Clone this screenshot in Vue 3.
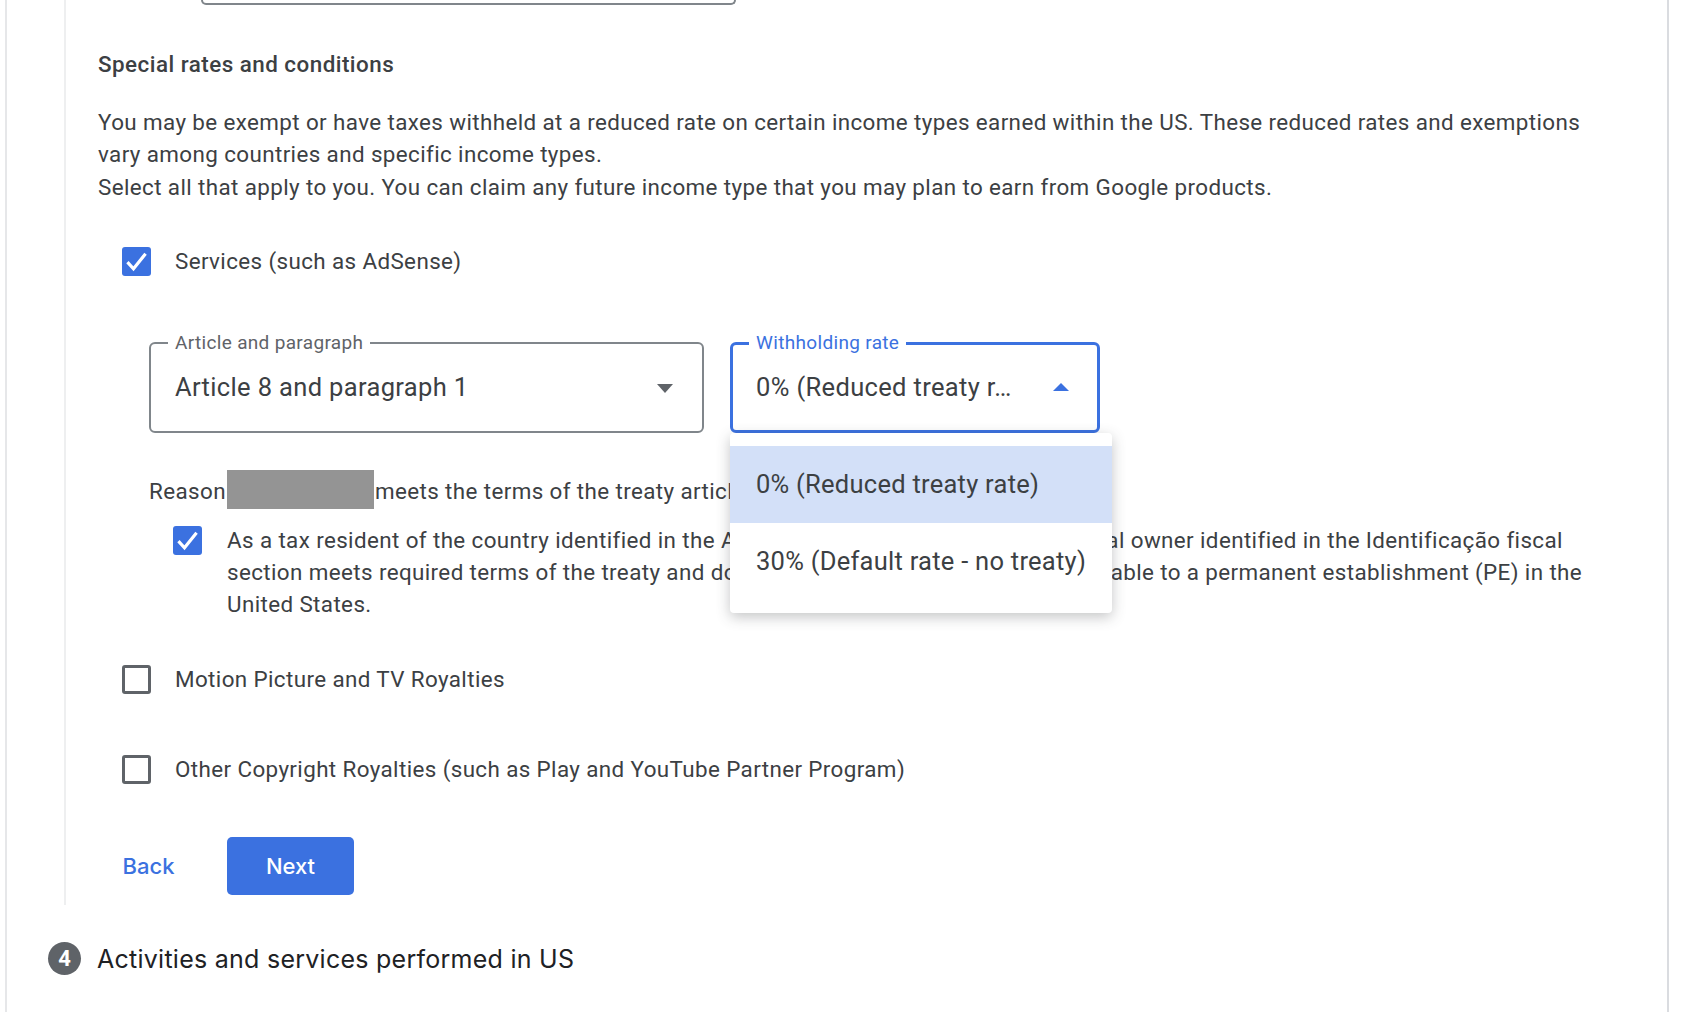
<script setup>
const options = ['0% (Reduced treaty rate)', '30% (Default rate - no treaty)']
</script>

<template>
  <div class="card">
    <div class="step">
      <div class="stub"></div>
      <h3 class="title">Special rates and conditions</h3>
      <p class="intro">
        You may be exempt or have taxes withheld at a reduced rate on certain income types earned within the US. These reduced rates and exemptions<br />
        vary among countries and specific income types.<br />
        Select all that apply to you. You can claim any future income type that you may plan to earn from Google products.
      </p>

      <label class="check-row first">
        <span class="box on">
          <svg viewBox="0 0 24 24"><path d="M4.5 12.5l5 5.5L19.5 5.5" /></svg>
        </span>
        <span>Services (such as AdSense)</span>
      </label>

      <div class="selects">
        <div class="select neutral">
          <span class="legend">Article and paragraph</span>
          <span class="value">Article 8 and paragraph 1</span>
          <span class="caret down"></span>
        </div>
        <div class="select active">
          <span class="legend">Withholding rate</span>
          <span class="value">0% (Reduced treaty r…</span>
          <span class="caret up"></span>
          <ul class="menu">
            <li v-for="(o, i) in options" :key="o" :class="{ sel: i === 0 }">{{ o }}</li>
          </ul>
        </div>
      </div>

      <div class="reason">
        <span class="reason-text">Reason</span><span class="redact"></span><span class="reason-text">meets the terms of the treaty article</span>
      </div>

      <div class="attest">
        <span class="box on">
          <svg viewBox="0 0 24 24"><path d="M4.5 12.5l5 5.5L19.5 5.5" /></svg>
        </span>
        <p>
          As a tax resident of the country identified in the Address on form section, the beneficial owner identified in the Identificação fiscal<br />
          section meets required terms of the treaty and does not own any such income attributable to a permanent establishment (PE) in the<br />
          United States.
        </p>
      </div>

      <label class="check-row motion">
        <span class="box"></span>
        <span>Motion Picture and TV Royalties</span>
      </label>
      <label class="check-row other">
        <span class="box"></span>
        <span>Other Copyright Royalties (such as Play and YouTube Partner Program)</span>
      </label>

      <div class="actions">
        <button class="back">Back</button>
        <button class="next">Next</button>
      </div>
    </div>

    <div class="next-step">
      <span class="num">4</span>
      <span class="next-title">Activities and services performed in US</span>
    </div>
  </div>
</template>

<style>
html, body { margin: 0; background: #fff; overflow: hidden; }
</style>

<style scoped>
.card {
  box-sizing: border-box;
  width: 1664px;
  height: 1012px;
  margin-left: 5px;
  border-left: 2px solid #e6e7e9;
  border-right: 2px solid #dadce0;
  overflow: hidden;
  font-family: Roboto, "Liberation Sans", sans-serif;
  color: #3c4043;
  font-size: 22.4px;
  letter-spacing: 0.39px;
}
.step {
  margin-left: 57px;
  border-left: 2px solid #eeeff0;
  padding-left: 32px;
  height: 905px;
  box-sizing: border-box;
}
.stub {
  width: 535px;
  height: 5px;
  margin-left: 103px;
  box-sizing: border-box;
  border: 2px solid #80868b;
  border-top: 0;
  border-radius: 0 0 6px 6px;
}
.title {
  margin: 45px 0 0;
  font-size: 22.4px;
  line-height: 28px;
  font-weight: 500;
  letter-spacing: 0.48px;
}
.intro {
  margin: 28px 0 0;
  line-height: 32.25px;
  white-space: nowrap;
}
.check-row {
  display: flex;
  align-items: center;
  gap: 24px;
  margin-left: 24px;
  height: 29px;
}
.first { margin-top: 44px; }
.motion { margin-top: 44px; }
.other { margin-top: 61px; }
.box {
  flex: none;
  box-sizing: border-box;
  width: 29px;
  height: 29px;
  border: 3px solid #5f6368;
  border-radius: 3px;
  background: #fff;
}
.box.on {
  background: #3b71e0;
  border: 0;
}
.box svg {
  display: block;
  width: 29px;
  height: 29px;
}
.box svg path {
  fill: none;
  stroke: #fff;
  stroke-width: 2.6;
}
.selects {
  display: flex;
  gap: 26px;
  margin: 66px 0 0 51px;
}
.select {
  position: relative;
  box-sizing: border-box;
  height: 91px;
  display: flex;
  align-items: center;
  padding-left: 24px;
  border-radius: 6px;
  font-size: 25.5px;
  letter-spacing: 0.35px;
}
.neutral {
  width: 555px;
  border: 2px solid #80868b;
}
.active {
  width: 370px;
  border: 3px solid #3b71e0;
  padding-left: 23px;
}
.legend {
  position: absolute;
  top: -13px;
  left: 17px;
  padding: 0 7px;
  background: #fff;
  font-size: 19px;
  line-height: 24px;
  letter-spacing: 0.33px;
  color: #5f6368;
}
.active .legend {
  top: -14px;
  left: 16px;
  color: #3b71e0;
}
.caret {
  position: absolute;
  width: 0;
  height: 0;
  border-left: 8px solid transparent;
  border-right: 8px solid transparent;
}
.down {
  top: 40px;
  right: 29px;
  border-top: 9px solid #5f6368;
}
.up {
  top: 38px;
  right: 28px;
  border-bottom: 8px solid #3b71e0;
}
.menu {
  position: absolute;
  z-index: 2;
  top: 88px;
  left: -3px;
  width: 382px;
  height: 180px;
  box-sizing: border-box;
  margin: 0;
  padding: 13px 0 0;
  list-style: none;
  background: #fff;
  border-radius: 4px;
  box-shadow: 0 4px 14px rgba(60, 64, 67, 0.3);
}
.menu li {
  height: 77px;
  display: flex;
  align-items: center;
  padding-left: 26px;
  white-space: nowrap;
  letter-spacing: 0.26px;
}
.menu li.sel {
  background: #d3e0f8;
}
.reason {
  display: flex;
  align-items: center;
  margin: 37px 0 0 51px;
  height: 39px;
}
.reason-text {
  padding-top: 4px;
}
.redact {
  width: 147px;
  height: 39px;
  margin: 0 1px;
  background: #949494;
}
.attest {
  display: flex;
  gap: 25px;
  margin: 15px 0 0 75px;
  align-items: flex-start;
}
.attest .box {
  margin-top: 2px;
}
.attest p {
  margin: 0;
  line-height: 32.25px;
  white-space: nowrap;
}
.actions {
  display: flex;
  align-items: center;
  gap: 26px;
  margin: 53px 0 0 0;
}
button {
  font-family: Inter, Roboto, sans-serif;
  font-size: 22px;
  font-weight: 500;
  border: 0;
  padding: 0;
  letter-spacing: 0;
}
.back {
  width: 103px;
  height: 58px;
  padding-right: 2px;
  background: none;
  color: #3b71e0;
}
.next {
  width: 127px;
  height: 58px;
  background: #3b71e0;
  color: #fff;
  border-radius: 5px;
}
.next-step {
  display: flex;
  align-items: center;
  gap: 16px;
  margin: 37px 0 0 41px;
}
.num {
  width: 33px;
  height: 33px;
  border-radius: 50%;
  background: #5f6368;
  color: #fff;
  display: flex;
  align-items: center;
  justify-content: center;
  font-family: Roboto, sans-serif;
  font-size: 22px;
  font-weight: 700;
  letter-spacing: 0;
}
.next-title {
  font-family: Inter, Roboto, sans-serif;
  font-size: 25px;
  letter-spacing: 0.26px;
  color: #202124;
}
</style>
